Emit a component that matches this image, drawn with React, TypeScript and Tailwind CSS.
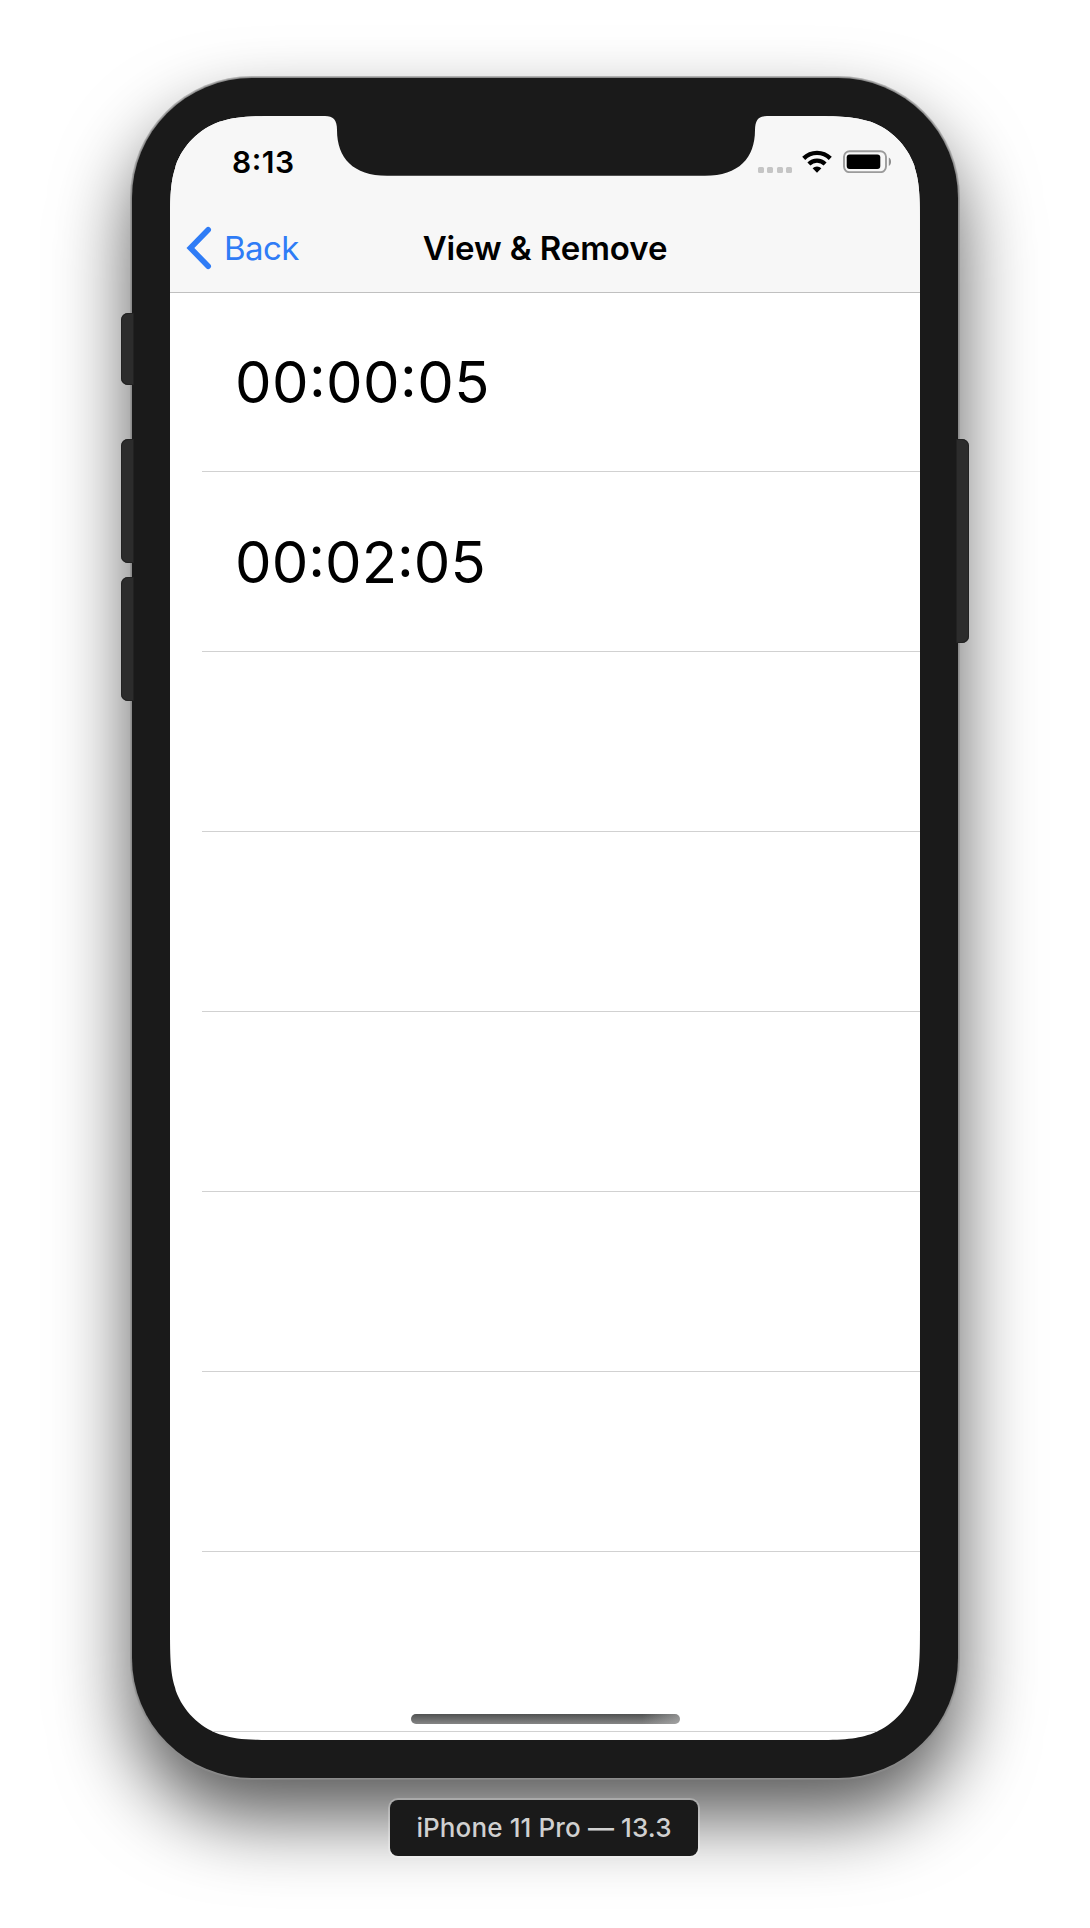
const rows = [
  { time: '00:00:05', tracking: 'tracking-[0.4px]' },
  { time: '00:02:05', tracking: 'tracking-[0.05px]' },
  ...Array.from({ length: 6 }, () => ({ time: '', tracking: '' })),
];

function WifiIcon() {
  return (
    <svg className="ml-[10px] h-[23px] w-[30px] shrink-0" viewBox="0 0 30 23" fill="none">
      <g stroke="#000" strokeWidth="4.3">
        <path d="M1.7 8.4a19 19 0 0 1 26.600 0" />
        <path d="M6.900 14a11.600 11.600 0 0 1 16.200 0" />
      </g>
      <path d="M15 22.700l-4.400-4.400a6.300 6.300 0 0 1 8.800 0z" fill="#000" />
    </svg>
  );
}

function BatteryIcon() {
  return (
    <svg className="ml-[11px] h-[23px] w-[49px] shrink-0" viewBox="0 0 49 23" fill="none">
      <rect x="1" y="1.2" width="42" height="21" rx="5.6" stroke="#9b9b9b" strokeWidth="1.9" />
      <rect x="3.7" y="4.4" width="33.6" height="14.600" rx="3" fill="#000" />
      <path d="M45.8 7.600c3 1.600 3 6.800 0 8.400z" fill="#8e8e8e" />
    </svg>
  );
}

function StatusBar() {
  return (
    <div className="flex h-[88px] items-start justify-between pl-[62px] pr-[28px] pt-[34px]">
      <span className="text-[30px] font-semibold leading-[24px] tracking-[0.5px] text-black [font-feature-settings:'case']">
        8:13
      </span>
      <div className="flex items-start">
        <div className="flex gap-[3.4px] pt-[17px]">
          {[0, 1, 2, 3].map((n) => (
            <span key={n} className="size-[6px] rounded-[1.5px] bg-[#c5c5c5]" />
          ))}
        </div>
        <WifiIcon />
        <BatteryIcon />
      </div>
    </div>
  );
}

function NavBar() {
  return (
    <div className="grid h-[88px] grid-cols-[1fr_auto_1fr] items-center px-[17px]">
      <div className="flex items-center text-[#2f7cf6]">
        <svg className="-ml-px h-[44px] w-[27px]" viewBox="0 0 27 44" fill="none">
          <path d="M22.2 3.8L4.4 22l17.800 18.200" stroke="currentColor" strokeWidth="5.6" strokeLinecap="round" />
        </svg>
        <span className="ml-[11px] text-[33px] leading-[40px] tracking-[-0.6px]">Back</span>
      </div>
      <h1 className="text-[33px] font-semibold leading-[40px] tracking-[-0.1px] text-black">View &amp; Remove</h1>
      <span />
    </div>
  );
}

function Notch() {
  return (
    <svg className="absolute left-[155px] top-0 h-[60px] w-[442px]" viewBox="0 0 442 60">
      <path
        d="M0 0C8 0 12 3.500 12 14C12 42 28 59.700 62 59.700H380C414 59.700 430 42 430 14C430 3.500 434 0 442 0Z"
        fill="#1a1a1a"
      />
    </svg>
  );
}

const sideButton = 'absolute w-[13px] bg-[#2c2c2c] shadow-[inset_0_0_0_1px_#222]';

export default function App() {
  return (
    <main className="flex h-[1928px] w-full flex-col items-center overflow-hidden bg-white pt-[78px] font-['Inter',sans-serif]">
      <div className="relative h-[1700px] w-[826px] shrink-0 rounded-[120px] bg-[#1a1a1a] p-[38px] shadow-[0_0_0_1px_#8c8c8c,0_0_0_2px_rgba(140,140,140,0.6),0_39px_77px_rgba(0,0,0,0.66)]">
        <i className={`${sideButton} left-[-11px] top-[235px] h-[72px] rounded-l-[7px]`} />
        <i className={`${sideButton} left-[-11px] top-[361px] h-[124px] rounded-l-[7px]`} />
        <i className={`${sideButton} left-[-11px] top-[499px] h-[124px] rounded-l-[7px]`} />
        <i className={`${sideButton} right-[-11px] top-[361px] h-[204px] rounded-r-[7px]`} />

        <div className="relative flex h-[1624px] w-[750px] flex-col overflow-hidden bg-white [clip-path:path('M119.2,0L630.8,0C665.1,0,682.3,0,697.7,5.1L700.7,5.8C720.9,13.2,736.8,29.1,744.2,49.3L744.9,52.3C750,67.7,750,84.9,750,119.2L750,1504.8C750,1539.1,750,1556.3,744.9,1571.7L744.2,1574.7C736.8,1594.9,720.9,1610.8,700.7,1618.2L697.7,1618.9C682.3,1624,665.1,1624,630.8,1624L119.2,1624C84.9,1624,67.7,1624,52.3,1618.9L49.3,1618.2C29.1,1610.8,13.2,1594.9,5.8,1574.7L5.1,1571.7C0,1556.3,0,1539.1,0,1504.8L0,119.2C0,84.9,0,67.7,5.1,52.3L5.8,49.3C13.2,29.1,29.1,13.2,49.3,5.8L52.3,5.1C67.7,0,84.9,0,119.2,0Z')]">
          <header className="shrink-0 border-b border-[#c0c0c0] bg-[#f7f7f7]">
            <StatusBar />
            <NavBar />
          </header>
          <Notch />

          <ul className="shrink-0 pl-8">
            {rows.map(({ time, tracking }, index) => (
              <li
                key={index}
                className={`flex h-[180px] items-center border-b border-[#d1d1d1] pl-[33px] text-[58px] leading-none text-black [font-feature-settings:'case'] first:h-[179px] ${tracking}`}
              >
                {time}
              </li>
            ))}
          </ul>

          <div className="absolute bottom-4 left-[241px] h-[10px] w-[269px] rounded-full bg-[linear-gradient(90deg,transparent_86%,rgba(190,190,190,0.55)_100%),linear-gradient(180deg,#505252,#858585)]" />
        </div>
      </div>

      <div className="relative mr-[2px] mt-[22px] flex h-[56px] w-[308px] shrink-0 items-center justify-center rounded-[8px] bg-[#1a1a1a] text-[26px] font-medium leading-none tracking-[0.12px] text-[#d0d0d0] shadow-[0_0_0_2px_rgba(255,255,255,0.25)]">
        iPhone 11 Pro — 13.3
      </div>
    </main>
  );
}
